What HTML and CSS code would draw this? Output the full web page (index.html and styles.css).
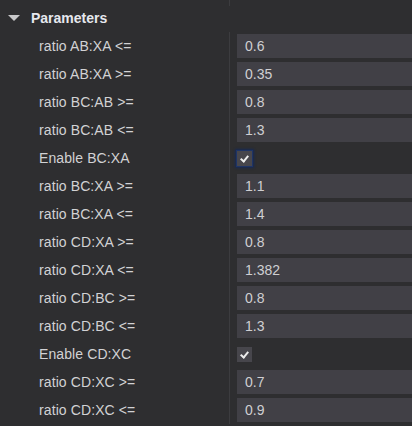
FILE: index.html
```html
<!DOCTYPE html>
<html lang="en">
<head>
    <meta charset="UTF-8">
    <meta name="viewport" content="width=device-width, initial-scale=1.0">
    <title>Parameters</title>
    <link rel="stylesheet" href="styles.css">
</head>
<body>
    <div class="panel">
        <div class="group-head">
            <div class="head-left">
                <span class="caret"></span>
                <span class="group-title">Parameters</span>
            </div>
            <div class="head-right"><div class="stub"></div></div>
        </div>
        <div class="row"><div class="name">ratio AB:XA &lt;=</div><div class="value"><input class="field" type="text" value="0.6"></div></div>
        <div class="row"><div class="name">ratio AB:XA &gt;=</div><div class="value"><input class="field" type="text" value="0.35"></div></div>
        <div class="row"><div class="name">ratio BC:AB &gt;=</div><div class="value"><input class="field" type="text" value="0.8"></div></div>
        <div class="row"><div class="name">ratio BC:AB &lt;=</div><div class="value"><input class="field" type="text" value="1.3"></div></div>
        <div class="row"><div class="name">Enable BC:XA</div><div class="value"><span class="check focused"></span></div></div>
        <div class="row"><div class="name">ratio BC:XA &gt;=</div><div class="value"><input class="field" type="text" value="1.1"></div></div>
        <div class="row"><div class="name">ratio BC:XA &lt;=</div><div class="value"><input class="field" type="text" value="1.4"></div></div>
        <div class="row"><div class="name">ratio CD:XA &gt;=</div><div class="value"><input class="field" type="text" value="0.8"></div></div>
        <div class="row"><div class="name">ratio CD:XA &lt;=</div><div class="value"><input class="field" type="text" value="1.382"></div></div>
        <div class="row"><div class="name">ratio CD:BC &gt;=</div><div class="value"><input class="field" type="text" value="0.8"></div></div>
        <div class="row"><div class="name">ratio CD:BC &lt;=</div><div class="value"><input class="field" type="text" value="1.3"></div></div>
        <div class="row"><div class="name">Enable CD:XC</div><div class="value"><span class="check"></span></div></div>
        <div class="row"><div class="name">ratio CD:XC &gt;=</div><div class="value"><input class="field" type="text" value="0.7"></div></div>
        <div class="row"><div class="name">ratio CD:XC &lt;=</div><div class="value"><input class="field" type="text" value="0.9"></div></div>
    </div>
</body>
</html>
```

FILE: styles.css
```css
body {
    margin: 0;
    background-color: #2e2e30;
    font-family: "Liberation Sans", Arial, sans-serif;
    overflow: hidden;
}

.panel {
    width: 100%;
}

.group-head {
    display: grid;
    grid-template-columns: 229px 1fr;
    height: 32px;
}

.head-left {
    display: flex;
    align-items: center;
    padding-left: 8px;
    padding-top: 4px;
}

.caret {
    width: 0;
    height: 0;
    border-left: 6px solid transparent;
    border-right: 6px solid transparent;
    border-top: 6px solid #c8c8ca;
    margin-right: 11px;
}

.group-title {
    color: #e6e8ee;
    font-weight: bold;
    font-size: 14px;
}

.stub {
    height: 6px;
    border-left: 1px solid #3c3c3f;
}

.row {
    display: grid;
    grid-template-columns: 229px 1fr;
    height: 28px;
}

.name {
    padding-left: 39px;
    color: #d2d2d4;
    font-size: 14px;
    letter-spacing: 0.1px;
    line-height: 28px;
    white-space: nowrap;
}

.value {
    border-left: 1px solid #3c3c3f;
    padding-left: 7px;
    display: flex;
    align-items: center;
    min-width: 0;
}

.field {
    box-sizing: border-box;
    width: 100%;
    min-width: 0;
    height: 24px;
    margin: 0;
    border: none;
    outline: none;
    background-color: #414046;
    color: #cfcfd2;
    font-family: "Liberation Sans", Arial, sans-serif;
    font-size: 14px;
    padding: 0 8px;
}

.check {
    position: relative;
    box-sizing: border-box;
    width: 15px;
    height: 15px;
    background-color: #47464c;
}

/* tick drawn from two borders of a rotated box */
.check::after {
    content: "";
    position: absolute;
    left: 5px;
    top: 3px;
    width: 3px;
    height: 6px;
    border-right: 2px solid #ececec;
    border-bottom: 2px solid #ececec;
    transform: rotate(40deg);
}

.check.focused {
    box-shadow: 0 0 0 1px #1e3466, 0 0 2px 2px #172a55;
}
```
